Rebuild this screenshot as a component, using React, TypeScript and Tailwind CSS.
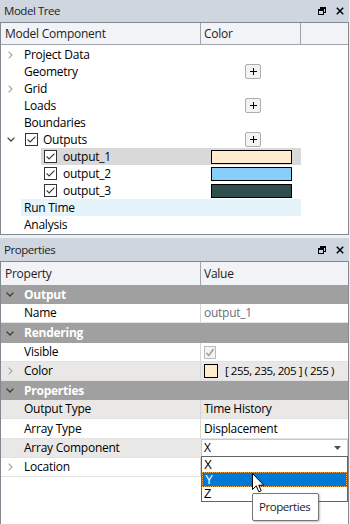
import React from "react";

const ChevR = ({ color = "#a6a6a6" }: { color?: string }) => (
  <svg width="5" height="8" viewBox="0 0 5 8">
    <polyline points="0.6,0.6 4,4 0.6,7.4" fill="none" stroke={color} strokeWidth="1.2" />
  </svg>
);
const ChevD = ({ color = "#404040" }: { color?: string }) => (
  <svg width="8" height="5" viewBox="0 0 8 5">
    <polyline points="0.6,0.6 4,4 7.4,0.6" fill="none" stroke={color} strokeWidth="1.3" />
  </svg>
);

const Check = () => (
  <svg width="13" height="13" viewBox="0 0 13 13">
    <rect x="0.5" y="0.5" width="12" height="12" fill="white" stroke="#333333" />
    <polyline points="2.6,6.4 5.1,8.9 10.4,3.6" fill="none" stroke="#333333" strokeWidth="1.1" />
  </svg>
);

const DisabledCheck = () => (
  <svg width="12" height="13" viewBox="0 0 12 13">
    <rect x="0.5" y="0.5" width="11" height="12" fill="#f4f4f4" stroke="#bcbcbc" />
    <polyline points="2.5,7 4.8,9.5 9.5,3" fill="none" stroke="#a0a0a0" strokeWidth="1.6" />
  </svg>
);

const RestoreIcon = () => (
  <svg width="8" height="8" viewBox="0 0 8 8">
    <rect x="2.5" y="0.5" width="5" height="5" fill="none" stroke="black" />
    <rect x="2" y="0" width="6" height="2" fill="black" />
    <rect x="0" y="2" width="6" height="6" fill="#cfd6e0" />
    <rect x="0.5" y="2.5" width="5" height="5" fill="none" stroke="black" />
    <rect x="0" y="2" width="6" height="2" fill="black" />
  </svg>
);

const CloseIcon = () => (
  <svg width="8" height="8" viewBox="0 0 8 8">
    <path d="M0.8 0.8L7.2 7.2M7.2 0.8L0.8 7.2" stroke="black" strokeWidth="1.5" />
  </svg>
);

const Plus = () => (
  <div className="w-[16px] h-[15px] border border-[#adadad] rounded-[2px] bg-[#f3f3f3] flex items-center justify-center">
    <svg width="7" height="7" viewBox="0 0 7 7">
      <path d="M3.5 0V7M0 3.5H7" stroke="black" strokeWidth="1" />
    </svg>
  </div>
);

function TitleBar({ title, h }: { title: string; h: string }) {
  return (
    <div className={`${h} bg-[#cfd6e0] flex items-center pl-[4px] pr-[5px]`}>
      <span className="flex-1 text-[#1e1e1e] text-[11.5px] tracking-[-0.45px]">{title}</span>
      <div className="flex items-center gap-[10px]">
        <RestoreIcon />
        <CloseIcon />
      </div>
    </div>
  );
}

function TreeRow0({
  label,
  chev,
  plus,
  bg,
}: {
  label: string;
  chev?: boolean;
  plus?: boolean;
  bg?: string;
}) {
  return (
    <div className="h-[17px] flex items-center">
      <div className="w-[20px] h-full flex items-center pl-[7px]">{chev ? <ChevR /> : null}</div>
      <div className={`w-[280px] h-full flex items-center ${bg ?? ""}`}>
        <div className="w-[180px] pl-[3px] whitespace-nowrap">{label}</div>
        <div className="w-[100px] h-full flex items-center pl-[44px]">{plus ? <Plus /> : null}</div>
      </div>
    </div>
  );
}

function TreeRow1({ label, color, sel }: { label: string; color: string; sel?: boolean }) {
  return (
    <div className="h-[17px] flex items-center">
      <div className="w-[40px] h-full" />
      <div className={`w-[260px] h-full flex items-center ${sel ? "bg-[#d9d9d9]" : ""}`}>
        <div className="w-[160px] flex items-center pl-[3px] gap-[6px] whitespace-nowrap">
          <Check />
          <span>{label}</span>
        </div>
        <div className="w-[100px] h-full flex items-center pl-[10px]">
          <div className="w-[81px] h-[14px] border border-black" style={{ backgroundColor: color }} />
        </div>
      </div>
    </div>
  );
}

function GroupRow({ label, h }: { label: string; h: string }) {
  return (
    <div className={`${h} bg-[#a0a0a0] flex items-center`}>
      <div className="w-[23px] h-full flex items-center pl-[5px]">
        <ChevD color="#3a3a3a" />
      </div>
      <span className="font-bold text-white">{label}</span>
    </div>
  );
}

function PropRow({
  label,
  h,
  gray,
  chev,
  children,
}: {
  label: string;
  h: string;
  gray?: boolean;
  chev?: boolean;
  children?: React.ReactNode;
}) {
  return (
    <div className={`${h} flex border-b border-[#e2e2e2] ${gray ? "bg-[#e9e8e6]" : "bg-white"}`}>
      <div className="w-[200px] h-full flex items-center border-r border-[#d6d6d6]">
        <div className="w-[23px] h-full flex items-center pl-[7px]">{chev ? <ChevR /> : null}</div>
        <span className="whitespace-nowrap">{label}</span>
      </div>
      <div className="flex-1 h-full flex items-center pl-[3px] whitespace-nowrap">{children}</div>
    </div>
  );
}

export default function App() {
  return (
    <div className="w-[350px] h-[524px] bg-[#eef0f3] relative overflow-hidden text-[12px] leading-[16px] tracking-[-0.25px] text-black font-['Open_Sans',sans-serif]">
      <div className="w-[349px] flex flex-col">
        {/* Model Tree */}
        <TitleBar title="Model Tree" h="h-[22px]" />
        <div className="h-[213px] border border-[#828790] bg-white flex flex-col">
          <div className="h-[22px] bg-[#f1f3f7] border-b border-[#a0a5ad] flex">
            <div className="w-[200px] h-full border-r border-[#a0a5ad] flex items-center pl-[4px] text-[#1e1e1e]">
              Model Component
            </div>
            <div className="w-[100px] h-full border-r border-[#a0a5ad] flex items-center pl-[3px] text-[#1e1e1e]">
              Color
            </div>
          </div>
          <div className="pt-[1px] flex flex-col">
            <TreeRow0 label="Project Data" chev />
            <TreeRow0 label="Geometry" plus />
            <TreeRow0 label="Grid" chev />
            <TreeRow0 label="Loads" plus />
            <TreeRow0 label="Boundaries" />
            <div className="h-[17px] flex items-center">
              <div className="w-[20px] h-full flex items-center pl-[6px]">
                <ChevD />
              </div>
              <div className="w-[280px] h-full flex items-center">
                <div className="w-[180px] flex items-center pl-[4px] gap-[5px]">
                  <Check />
                  <span>Outputs</span>
                </div>
                <div className="w-[100px] h-full flex items-center pl-[44px]">
                  <Plus />
                </div>
              </div>
            </div>
            <TreeRow1 label="output_1" color="#ffebcd" sel />
            <TreeRow1 label="output_2" color="#87cefa" />
            <TreeRow1 label="output_3" color="#2f4f4f" />
            <TreeRow0 label="Run Time" bg="bg-[#e5f3fb]" />
            <TreeRow0 label="Analysis" />
          </div>
        </div>

        <div className="h-[3px]" />

        {/* Properties */}
        <TitleBar title="Properties" h="h-[23px]" />
        <div className="h-[263px] border-x border-t border-[#828790] bg-white flex flex-col">
          <div className="h-[23px] bg-[#f1f3f7] flex">
            <div className="w-[200px] h-full border-r border-[#a0a5ad] flex items-center pl-[4px] text-[#1e1e1e]">
              Property
            </div>
            <div className="flex-1 h-full flex items-center pl-[3px] text-[#1e1e1e]">Value</div>
          </div>
          <GroupRow label="Output" h="h-[19px]" />
          <PropRow label="Name" h="h-[19px]">
            <span className="text-[#6d6d7d]">output_1</span>
          </PropRow>
          <GroupRow label="Rendering" h="h-[20px]" />
          <PropRow label="Visible" h="h-[19px]">
            <DisabledCheck />
          </PropRow>
          <PropRow label="Color" h="h-[19px]" gray chev>
            <div className="w-[14px] h-[14px] border border-black bg-[#ffebcd] mr-[7px]" />
            <span className="text-[11.5px] tracking-[-0.45px]">[ 255, 235, 205 ] ( 255 )</span>
          </PropRow>
          <GroupRow label="Properties" h="h-[19px]" />
          <PropRow label="Output Type" h="h-[19px]" gray>
            Time History
          </PropRow>
          <PropRow label="Array Type" h="h-[20px]">
            Displacement
          </PropRow>
          <div className="h-[19px] flex border-b border-[#e2e2e2] bg-[#e9e8e6]">
            <div className="w-[200px] h-full flex items-center">
              <div className="w-[23px] h-full" />
              <span className="whitespace-nowrap">Array Component</span>
            </div>
            <div className="flex-1 h-full bg-white border border-[#c8c8c8] flex items-center pl-[2px] pr-[6px]">
              <span className="flex-1">X</span>
              <svg width="7" height="4" viewBox="0 0 7 4">
                <path d="M0 0H7L3.5 4Z" fill="#505050" />
              </svg>
            </div>
          </div>
          <PropRow label="Location" h="h-[19px]" chev />
        </div>
      </div>

      {/* Dropdown list */}
      <div className="absolute left-[201px] top-[456px] w-[147px] h-[46px] bg-white border border-[#646464] flex flex-col leading-[12px] text-[12px] tracking-normal font-['Liberation_Sans',sans-serif]">
        <div className="h-[15px] flex items-center pl-[2px]">X</div>
        <div className="h-[15px] flex items-center pl-[2px] bg-[#0078d7] text-white border border-dotted border-[#f0a850]">
          Y
        </div>
        <div className="h-[14px] flex items-center pl-[2px]">Z</div>
      </div>

      {/* Cursor */}
      <svg className="absolute left-[252px] top-[473px]" width="13" height="21" viewBox="0 0 13 21">
        <path
          d="M0.5 0.5 L0.5 16.5 L4.3 12.9 L6.8 18.8 L9.2 17.8 L6.8 12.2 L11.8 12.2 Z"
          fill="white"
          stroke="black"
          strokeWidth="1"
          strokeLinejoin="round"
        />
      </svg>

      {/* Tooltip */}
      <div className="absolute left-[252px] top-[493px] w-[67px] h-[28px] bg-white border border-[#767676] rounded-[2px] shadow-[1px_1px_2px_rgba(0,0,0,0.25)] flex items-center pl-[6px] text-[#1e1e1e] text-[11.5px] tracking-[-0.45px]">
        Properties
      </div>
    </div>
  );
}
